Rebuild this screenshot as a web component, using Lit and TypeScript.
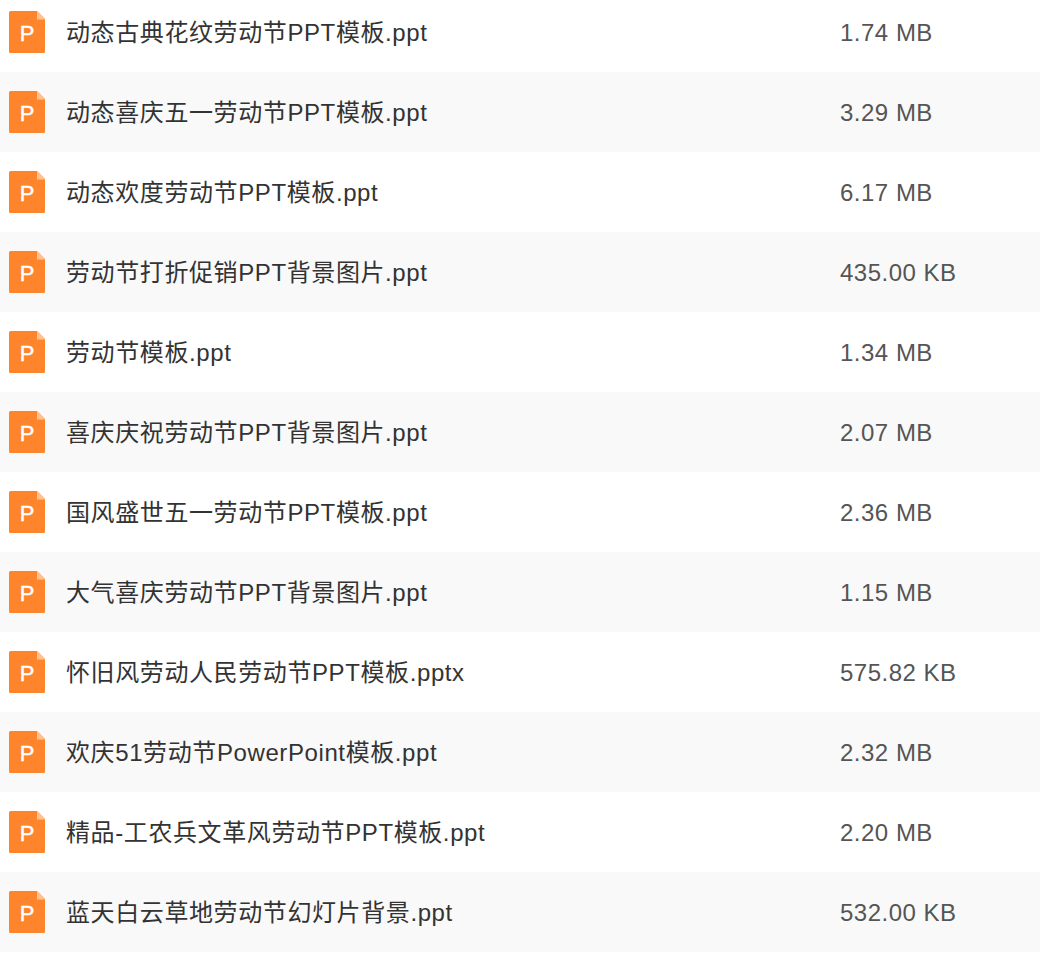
import { LitElement, html, css } from "lit";
import { customElement } from "lit/decorators.js";

const FILES: [string, string][] = [
  ["动态古典花纹劳动节PPT模板.ppt", "1.74 MB"],
  ["动态喜庆五一劳动节PPT模板.ppt", "3.29 MB"],
  ["动态欢度劳动节PPT模板.ppt", "6.17 MB"],
  ["劳动节打折促销PPT背景图片.ppt", "435.00 KB"],
  ["劳动节模板.ppt", "1.34 MB"],
  ["喜庆庆祝劳动节PPT背景图片.ppt", "2.07 MB"],
  ["国风盛世五一劳动节PPT模板.ppt", "2.36 MB"],
  ["大气喜庆劳动节PPT背景图片.ppt", "1.15 MB"],
  ["怀旧风劳动人民劳动节PPT模板.pptx", "575.82 KB"],
  ["欢庆51劳动节PowerPoint模板.ppt", "2.32 MB"],
  ["精品-工农兵文革风劳动节PPT模板.ppt", "2.20 MB"],
  ["蓝天白云草地劳动节幻灯片背景.ppt", "532.00 KB"],
];

@customElement("app-root")
export class AppRoot extends LitElement {
  static styles = css`
    :host {
      display: block;
      height: 966px;
      overflow: hidden;
      background: #fff;
      font-family: "Liberation Sans", "Noto Sans CJK SC", sans-serif;
      color: #333;
    }
    .list {
      margin-top: -8px;
    }
    .row {
      display: grid;
      grid-template-columns: 36px 1fr 200px;
      column-gap: 21px;
      align-items: center;
      height: 80px;
      padding-left: 9px;
      box-sizing: border-box;
    }
    .row:nth-child(even) {
      background: #f9f9f9;
    }
    .icon {
      display: block;
      width: 36px;
      height: 42px;
    }
    .icon text {
      font-family: "Liberation Sans", sans-serif;
      font-size: 22px;
      fill: #fff;
      stroke: #fff;
      stroke-width: 0.4;
    }
    .name {
      font-size: 24px;
      line-height: 32px;
      letter-spacing: 0.6px;
      color: #333;
      padding-top: 2px;
    }
    .size {
      font-size: 24px;
      line-height: 32px;
      letter-spacing: 0.5px;
      color: #555;
      padding-top: 2px;
    }
  `;

  private icon() {
    return html`<svg class="icon" viewBox="0 0 36 42">
      <path d="M1.5 0H28L36 8V40.5A1.5 1.5 0 0 1 34.5 42H1.5A1.5 1.5 0 0 1 0 40.5V1.5A1.5 1.5 0 0 1 1.5 0Z" fill="#ff852d"/>
      <path d="M28 0L36 8.5H28Z" fill="#ffc294"/>
      <text x="18" y="30" text-anchor="middle">P</text>
    </svg>`;
  }

  render() {
    return html`<div class="list">
      ${FILES.map(
        ([name, size]) => html`<div class="row">
          ${this.icon()}
          <div class="name">${name}</div>
          <div class="size">${size}</div>
        </div>`
      )}
    </div>`;
  }
}
